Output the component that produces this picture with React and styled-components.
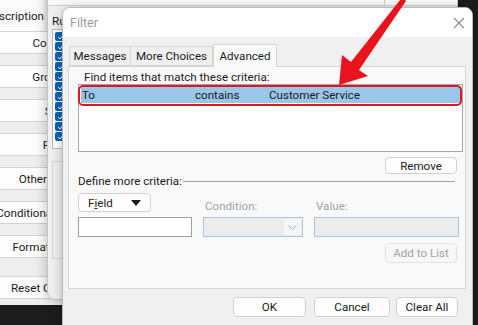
import React from "react";
import styled, { createGlobalStyle } from "styled-components";

const GlobalStyle = createGlobalStyle`
  html, body {
    margin: 0;
    padding: 0;
    background: #1c1c1c;
    overflow: hidden;
  }
`;

const Desktop = styled.div`
  position: relative;
  width: 478px;
  height: 325px;
  overflow: hidden;
  background: #1c1c1c;
  font-family: Roboto, "Noto Sans", sans-serif;
  font-size: 11.6px;
  color: #1b1b1b;
`;

/* ---- back window: view settings ---- */
const ViewWindow = styled.div`
  position: absolute;
  left: -20px;
  top: -10px;
  width: 200px;
  height: 315px;
  background: #eeeeee;
  display: flex;
  flex-direction: column;
`;

const ViewHeader = styled.div`
  height: 41px;
  width: 64px;
  display: flex;
  justify-content: flex-end;
  align-items: flex-end;
  padding-bottom: 7px;
  box-sizing: border-box;
  background: #fbfbfb;
  white-space: nowrap;
  line-height: 16px;
`;

const ViewButton = styled.div`
  margin-left: 5px;
  margin-top: ${(p) => p.$gap}px;
  width: 150px;
  height: 23px;
  box-sizing: border-box;
  border-top: 1px solid #d2d2d2;
  border-bottom: 1px solid #d2d2d2;
  background: #fdfdfd;
  display: flex;
  align-items: center;
  justify-content: center;
  white-space: nowrap;
`;

/* ---- middle window: rules ---- */
const RulesWindow = styled.div`
  position: absolute;
  left: 47px;
  top: -20px;
  width: 411px;
  height: 320px;
  box-sizing: border-box;
  border: 1px solid #c4c4c4;
  border-radius: 8px;
  background: #f0f0f0;
  box-shadow: -3px 0 10px rgba(0, 0, 0, 0.18);
  display: flex;
  flex-direction: column;
  padding-left: 4px;
`;

const RulesStrip = styled.div`
  height: 25px;
  margin-left: -4px;
  box-sizing: border-box;
  background: #f9f9f9;
  border-bottom: 1px solid #cfcfcf;
  display: flex;
`;

const StripCell = styled.div`
  width: 336px;
  border-right: 1px solid #cfcfcf;
`;

const RulesLabel = styled.div`
  margin-top: 9px;
  line-height: 12px;
`;

const RulesList = styled.div`
  margin-top: 2px;
  width: 80px;
  height: 120px;
  box-sizing: border-box;
  border: 1px solid #b8b8b8;
  background: #fff;
  padding: 2px 0 0 2px;
  display: flex;
  flex-direction: column;
  gap: 1px;
`;

const CheckBox = styled.div`
  width: 10px;
  height: 9px;
  border-radius: 2px;
  background: #0a62b8;
  display: flex;
  align-items: center;
  justify-content: center;
`;

const RulesGroup = styled.div`
  margin-top: 12px;
  width: 80px;
  height: 98px;
  box-sizing: border-box;
  border: 1px solid #d6d6d6;
`;

/* ---- filter dialog ---- */
const FilterWindow = styled.div`
  position: absolute;
  left: 62px;
  top: 7px;
  width: 411px;
  height: 330px;
  box-sizing: border-box;
  border: 1px solid #b9b9b9;
  border-radius: 8px;
  overflow: hidden;
  background: #f0f0f0;
  box-shadow: 0 2px 12px rgba(0, 0, 0, 0.25);
  display: flex;
  flex-direction: column;
`;

const TitleBar = styled.div`
  height: 29px;
  background: #ffffff;
  display: flex;
  align-items: center;
  justify-content: space-between;
  padding: 0 7px 0 7px;
`;

const Title = styled.span`
  color: #9a9a9a;
  font-size: 12.5px;
`;

const Body = styled.div`
  padding: 7px 6px 0 6px;
  display: flex;
  flex-direction: column;
`;

const TabRow = styled.div`
  height: 22px;
  display: flex;
  align-items: flex-end;
`;

const Tab = styled.div`
  height: ${(p) => (p.$active ? 23 : 20)}px;
  margin-bottom: ${(p) => (p.$active ? -1 : 0)}px;
  width: ${(p) => p.$w}px;
  box-sizing: border-box;
  border: 1px solid #d6d6d6;
  border-bottom: ${(p) => (p.$active ? "none" : "1px solid #d6d6d6")};
  border-left: ${(p) => (p.$noLeft ? "none" : "1px solid #d6d6d6")};
  background: ${(p) => (p.$active ? "#f9f9f9" : "#f0f0f0")};
  display: flex;
  align-items: center;
  justify-content: center;
  position: relative;
  z-index: 1;
  white-space: nowrap;
`;

const Panel = styled.div`
  margin-left: -1px;
  width: 398px;
  height: 223px;
  box-sizing: border-box;
  border: 1px solid #d6d6d6;
  background: #f9f9f9;
  display: flex;
  flex-direction: column;
`;

const Caption = styled.div`
  margin: 3px 0 0 15px;
  line-height: 14px;
`;

const ListBox = styled.div`
  margin-left: 9px;
  width: 385px;
  height: 68px;
  box-sizing: border-box;
  border: 1px solid #a6a6a6;
  background: #fff;
  padding: 2px 2px 0 2px;
`;

const CriteriaRow = styled.div`
  position: relative;
  height: 16px;
  background: #9ac6ea;
  display: grid;
  grid-template-columns: 113px 74px 1fr;
  align-items: center;
  padding-left: 1px;
  white-space: nowrap;
  line-height: 16px;

  &::after {
    content: "";
    position: absolute;
    inset: -2px -2px -3px -3px;
    border: 2px solid #e8131c;
    border-radius: 5px;
  }
`;

const Button = styled.div`
  width: ${(p) => p.$w}px;
  height: ${(p) => p.$h || 20}px;
  box-sizing: border-box;
  border: 1px solid ${(p) => (p.$disabled ? "#e2e2e2" : "#d0d0d0")};
  border-radius: 4px;
  background: ${(p) => (p.$disabled ? "#f7f7f7" : "#fdfdfd")};
  color: ${(p) => (p.$disabled ? "#a3a3a3" : "#1b1b1b")};
  display: flex;
  align-items: center;
  justify-content: center;
  gap: ${(p) => p.$gapInner || 0}px;
  white-space: nowrap;
`;

const RightRow = styled.div`
  display: flex;
  justify-content: flex-end;
  margin: ${(p) => p.$top}px 8px 0 0;
`;

const DefineRow = styled.div`
  margin: 0 10px 0 9px;
  height: 14px;
  display: flex;
  align-items: center;
  gap: 1px;
  line-height: 14px;
  white-space: nowrap;
`;

const Rule = styled.div`
  flex: 1;
  height: 1px;
  background: #a0a0a0;
`;

const CriteriaGrid = styled.div`
  margin: 5px 0 0 9px;
  display: grid;
  grid-template-columns: 114px 100px 145px;
  grid-template-rows: 18px 20px;
  column-gap: 11px;
  row-gap: 6px;
`;

const FieldLabel = styled.div`
  color: #a3a3a3;
  align-self: end;
  line-height: 12px;
  padding-left: 2px;
  margin-bottom: -1px;
`;

const Input = styled.div`
  box-sizing: border-box;
  border: 1px solid ${(p) => (p.$disabled ? "#a9c4e2" : "#a0a0a0")};
  background: ${(p) => (p.$disabled ? "#ececec" : "#ffffff")};
  display: flex;
  justify-content: flex-end;
  padding: 1px;
`;

const ChevronBox = styled.div`
  width: 17px;
  background: #f6f6f6;
  display: flex;
  align-items: center;
  justify-content: center;
`;

const Footer = styled.div`
  display: flex;
  justify-content: flex-end;
  padding: 8px 8px 0 0;
`;

const FooterButton = styled(Button)`
  margin-left: ${(p) => p.$ml || 0}px;
`;

const Arrow = styled.svg`
  position: absolute;
  left: 0;
  top: 0;
  pointer-events: none;
`;

const viewButtons = [
  ["Columns...", 0],
  ["Group By...", 11],
  ["Sort...", 11],
  ["Filter...", 11],
  ["Other Settings...", 11],
  ["Conditional Formatting...", 11],
  ["Format Columns...", 11],
  ["Reset Current View", 18],
];

export default function App() {
  return (
    <Desktop>
      <GlobalStyle />

      <ViewWindow>
        <ViewHeader>Description</ViewHeader>
        {viewButtons.map(([label, gap]) => (
          <ViewButton key={label} $gap={gap}>
            {label}
          </ViewButton>
        ))}
      </ViewWindow>

      <RulesWindow>
        <RulesStrip>
          <StripCell />
        </RulesStrip>
        <RulesLabel>Rules</RulesLabel>
        <RulesList>
          {Array.from({ length: 11 }).map((_, i) => (
            <CheckBox key={i}>
              <svg width="7" height="6" viewBox="0 0 7 6">
                <path d="M1 3l2 2 3-4" fill="none" stroke="#fff" strokeWidth="1" />
              </svg>
            </CheckBox>
          ))}
        </RulesList>
        <RulesGroup />
      </RulesWindow>

      <FilterWindow>
        <TitleBar>
          <Title>Filter</Title>
          <svg width="12" height="12" viewBox="0 0 12 12">
            <path d="M1 1L11 11M11 1L1 11" stroke="#8a8a8a" strokeWidth="1.1" />
          </svg>
        </TitleBar>
        <Body>
          <TabRow>
            <Tab $w={62}>Messages</Tab>
            <Tab $w={82} $noLeft>More Choices</Tab>
            <Tab $w={64} $active>Advanced</Tab>
          </TabRow>
          <Panel>
            <Caption>Find items that match these criteria:</Caption>
            <ListBox>
              <CriteriaRow>
                <span>To</span>
                <span>contains</span>
                <span>Customer Service</span>
              </CriteriaRow>
            </ListBox>
            <RightRow $top={5}>
              <Button $w={72} $h={17}>Remove</Button>
            </RightRow>
            <DefineRow>
              Define more criteria:
              <Rule />
            </DefineRow>
            <CriteriaGrid>
              <Button $w={73} $h={19} $gapInner={18}>
                <span>
                  F<u>i</u>eld
                </span>
                <svg width="10" height="6" viewBox="0 0 10 6">
                  <path d="M0 0H10L5 6Z" fill="#1b1b1b" />
                </svg>
              </Button>
              <FieldLabel>Condition:</FieldLabel>
              <FieldLabel>Value:</FieldLabel>
              <Input />
              <Input $disabled>
                <ChevronBox>
                  <svg width="9" height="5" viewBox="0 0 9 5">
                    <path d="M0.5 0.5L4.5 4.5L8.5 0.5" fill="none" stroke="#a8a8a8" strokeWidth="1" />
                  </svg>
                </ChevronBox>
              </Input>
              <Input $disabled />
            </CriteriaGrid>
            <RightRow $top={6}>
              <Button $w={72} $disabled>Add to List</Button>
            </RightRow>
          </Panel>
          <Footer>
            <FooterButton $w={73}>OK</FooterButton>
            <FooterButton $w={76} $ml={8}>Cancel</FooterButton>
            <FooterButton $w={62} $ml={6}>Clear All</FooterButton>
          </Footer>
        </Body>
      </FilterWindow>

      <Arrow width="478" height="325" viewBox="0 0 478 325">
        <polygon
          points="339,85 342,55 351,62 400,0 403,-2 406,1 359,70 368,76"
          fill="#e8131c"
        />
      </Arrow>
    </Desktop>
  );
}
